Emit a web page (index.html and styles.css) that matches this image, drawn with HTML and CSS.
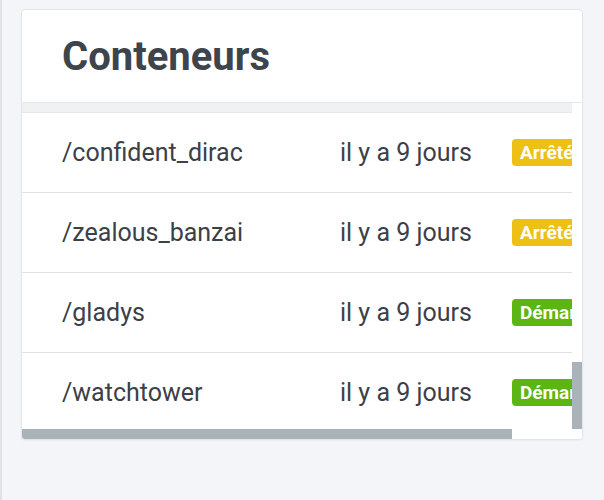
FILE: index.html
```html
<!DOCTYPE html>
<html lang="fr">
<head>
<meta charset="utf-8">
<title>Conteneurs</title>
<link rel="stylesheet" href="styles.css">
</head>
<body>
<div class="card">
  <div class="card-header">
    <h1 class="title">Conteneurs</h1>
  </div>
  <div class="scroller">
    <div class="viewport">
      <div class="thead"></div>
      <div class="row">
        <span class="cell name">/confident_dirac</span>
        <span class="cell time">il y a 9 jours</span>
        <span class="cell status"><span class="badge stopped">Arrêté</span></span>
      </div>
      <div class="row">
        <span class="cell name">/zealous_banzai</span>
        <span class="cell time">il y a 9 jours</span>
        <span class="cell status"><span class="badge stopped">Arrêté</span></span>
      </div>
      <div class="row">
        <span class="cell name">/gladys</span>
        <span class="cell time">il y a 9 jours</span>
        <span class="cell status"><span class="badge started">Démarré</span></span>
      </div>
      <div class="row">
        <span class="cell name">/watchtower</span>
        <span class="cell time">il y a 9 jours</span>
        <span class="cell status"><span class="badge started">Démarré</span></span>
      </div>
    </div>
    <div class="vtrack"><div class="vthumb"></div></div>
    <div class="htrack"><div class="hthumb"></div></div>
    <div class="corner"></div>
  </div>
</div>
</body>
</html>
```

FILE: styles.css
```css
html, body {
  margin: 0;
  padding: 0;
}
body {
  width: 604px;
  height: 500px;
  box-sizing: border-box;
  background: #f4f5f9;
  border-left: 2px solid #e0e2e6;
  font-family: Roboto, "Liberation Sans", sans-serif;
  overflow: hidden;
}
.card {
  margin: 9px 0 0 19px;
  width: 562px;
  box-sizing: border-box;
  background: #fff;
  border: 1px solid #e3e5e9;
  border-radius: 4px;
  box-shadow: 0 1px 2px rgba(0,0,0,0.04);
  overflow: hidden;
}
.card-header {
  height: 92px;
  display: flex;
  align-items: center;
  padding-left: 40px;
  border-bottom: 1px solid #e4e6ea;
}
.title {
  margin: 0;
  font-size: 40px;
  font-weight: 700;
  color: #3e444c;
  letter-spacing: 0;
}
.scroller {
  display: grid;
  grid-template-columns: 550px 10px;
  grid-template-rows: 326px 10px;
}
.viewport {
  overflow: hidden;
  display: flex;
  flex-direction: column;
}
.thead {
  flex: 0 0 9px;
  background: #f0f1f3;
  border-bottom: 1px solid #e6e8eb;
}
.row {
  flex: 0 0 80px;
  box-sizing: border-box;
  display: flex;
  align-items: center;
  border-bottom: 1px solid #dfe1e5;
  padding-left: 40px;
  white-space: nowrap;
}
.cell {
  font-size: 25px;
  color: #3c4047;
}
.name {
  flex: 0 0 278px;
}
.time {
  flex: 0 0 172px;
}
.status {
  flex: 0 0 auto;
  display: flex;
}
.badge {
  display: inline-block;
  padding: 0 8px;
  height: 27px;
  line-height: 27px;
  border-radius: 4px;
  color: #fff;
  font-size: 19px;
  font-weight: 700;
}
.badge.stopped {
  background: #eebf14;
}
.badge.started {
  background: #5cb612;
}
.vtrack {
  display: flex;
  flex-direction: column;
  justify-content: flex-end;
  background: #fff;
}
.vthumb {
  height: 67px;
  background: #aab2ba;
}
.htrack {
  background: #fff;
  display: flex;
}
.hthumb {
  width: 490px;
  background: #aab2ba;
}
.corner {
  background: #fff;
}
```
